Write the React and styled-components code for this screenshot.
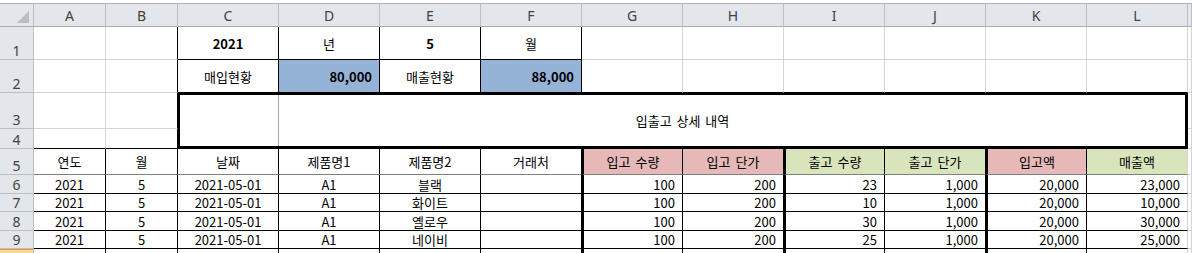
import React from "react";
import styled, { createGlobalStyle } from "styled-components";

const GlobalStyle = createGlobalStyle`
  html, body {
    margin: 0;
    padding: 0;
    background: #fff;
    overflow: hidden;
  }
  body {
    font-family: "Noto Sans CJK KR", "Noto Sans", sans-serif;
  }
`;

const GRID = "#d4d4d4";
const LINE = "1px solid #000";
const THICK = "2px solid #000";
const HEAD_LINE = "#b9bfc7";
const BLUE = "#95b3d7";
const PINK = "#e6b8b7";
const GREEN = "#d8e4bc";

const TopStrip = styled.div`
  height: 3px;
  background: #fff;
  border-bottom: 1px solid #aab1ba;
`;

const Sheet = styled.div`
  display: grid;
  grid-template-columns: 34px 72px 72px repeat(10, 101px) 1fr;
  grid-template-rows: 23px 33px 33px 36px 20px 26px 19px 18px 19px 18px 20px;
`;

const ColHead = styled.div`
  box-sizing: border-box;
  background: #e3e6eb;
  border-right: 1px solid ${HEAD_LINE};
  border-bottom: 1px solid #a3abb5;
  display: flex;
  align-items: center;
  justify-content: center;
  font-family: "Noto Sans", sans-serif;
  font-size: 14px;
  color: #424242;
`;

const Corner = styled(ColHead)`
  align-items: flex-end;
  justify-content: flex-end;
  padding: 0 4px 3px 0;
`;

const RowHead = styled.div`
  box-sizing: border-box;
  background: ${(p) => (p.$active ? "linear-gradient(#f9d99f, #f1c15f)" : "#e3e6eb")};
  border-top: ${(p) => (p.$active ? "1px solid #f29436" : "none")};
  border-right: 1px solid ${HEAD_LINE};
  border-bottom: 1px solid ${HEAD_LINE};
  display: flex;
  align-items: flex-end;
  justify-content: center;
  line-height: 16px;
  font-family: "Noto Sans", sans-serif;
  font-size: 14px;
  color: #424242;
`;

const Cell = styled.div`
  box-sizing: border-box;
  min-width: 0;
  overflow: hidden;
  white-space: nowrap;
  background: ${(p) => p.$bg || "#fff"};
  border-right: ${(p) => p.$r || `1px solid ${GRID}`};
  border-bottom: ${(p) => p.$b || `1px solid ${GRID}`};
  border-left: ${(p) => p.$l || "none"};
  display: flex;
  align-items: center;
  justify-content: ${(p) => (p.$num ? "flex-end" : "center")};
  padding-right: ${(p) => (p.$num ? "7px" : "0")};
  font-size: 13px;
  word-spacing: 2px;
  font-weight: ${(p) => (p.$bold ? 700 : 400)};
  color: #000;
`;

const DetailBox = styled.div`
  grid-column: 4 / 14;
  grid-row: 4 / 6;
  box-sizing: border-box;
  border-style: solid;
  border-color: #000;
  border-width: 2px 3px 3px 2px;
  background: #fff
    linear-gradient(
      to right,
      transparent 98px,
      #a6a6a6 98px,
      #a6a6a6 99px,
      transparent 99px
    );
  display: flex;
  align-items: center;
  justify-content: center;
  font-size: 13px;
  word-spacing: 2px;
  color: #000;
`;

const COLS = ["A", "B", "C", "D", "E", "F", "G", "H", "I", "J", "K", "L"];

const HEADERS = [
  ["연도"], ["월"], ["날짜"], ["제품명1"], ["제품명2"], ["거래처"],
  ["입고 수량", PINK], ["입고 단가", PINK], ["출고 수량", GREEN],
  ["출고 단가", GREEN], ["입고액", PINK], ["매출액", GREEN],
];

const ROWS = [
  ["2021", "5", "2021-05-01", "A1", "블랙", "", "100", "200", "23", "1,000", "20,000", "23,000"],
  ["2021", "5", "2021-05-01", "A1", "화이트", "", "100", "200", "10", "1,000", "20,000", "10,000"],
  ["2021", "5", "2021-05-01", "A1", "옐로우", "", "100", "200", "30", "1,000", "20,000", "30,000"],
  ["2021", "5", "2021-05-01", "A1", "네이비", "", "100", "200", "25", "1,000", "20,000", "25,000"],
];

// borders of the table part (rows 5-10)
const tableEdge = (i) => ({
  $l: i === 6 || i === 8 || i === 10 ? THICK : undefined,
  $r: i === 11 ? undefined : LINE,
});

const CornerMark = () => (
  <svg width="12" height="12" viewBox="0 0 12 12">
    <polygon points="12,0 12,12 0,12" fill="#b9bec5" />
  </svg>
);

const App = () => {
  return (
    <>
      <GlobalStyle />
      <TopStrip />
      <Sheet>
        <Corner>
          <CornerMark />
        </Corner>
        {COLS.map((c) => (
          <ColHead key={c}>{c}</ColHead>
        ))}
        <ColHead />

        {/* row 1 */}
        <RowHead>1</RowHead>
        <Cell />
        <Cell $r={LINE} />
        <Cell $r={LINE} $b={LINE} $bold>2021</Cell>
        <Cell $r={LINE} $b={LINE}>년</Cell>
        <Cell $r={LINE} $b={LINE} $bold>5</Cell>
        <Cell $r={LINE} $b={LINE}>월</Cell>
        <Cell />
        <Cell />
        <Cell />
        <Cell />
        <Cell />
        <Cell />
        <Cell />

        {/* row 2 */}
        <RowHead>2</RowHead>
        <Cell />
        <Cell $r={LINE} />
        <Cell $r={LINE} $b={LINE}>매입현황</Cell>
        <Cell $r={LINE} $b={LINE} $bg={BLUE} $num $bold>80,000</Cell>
        <Cell $r={LINE} $b={LINE}>매출현황</Cell>
        <Cell $r={LINE} $b={LINE} $bg={BLUE} $num $bold>88,000</Cell>
        <Cell $b={LINE} />
        <Cell $b={LINE} />
        <Cell $b={LINE} />
        <Cell $b={LINE} />
        <Cell $b={LINE} />
        <Cell $b={LINE} />
        <Cell />

        {/* rows 3-4 */}
        <RowHead>3</RowHead>
        <Cell />
        <Cell $r={LINE} />
        <Cell />
        <RowHead>4</RowHead>
        <Cell $b={LINE} />
        <Cell $r={LINE} $b={LINE} />
        <Cell />
        <DetailBox>입출고 상세 내역</DetailBox>

        {/* row 5 */}
        <RowHead>5</RowHead>
        {HEADERS.map(([label, bg], i) => (
          <Cell key={label} {...tableEdge(i)} $b="1px solid #7f7f7f" $bg={bg}>
            {label}
          </Cell>
        ))}
        <Cell />

        {/* rows 6-9 */}
        {ROWS.map((row, r) => (
          <React.Fragment key={r}>
            <RowHead>{r + 6}</RowHead>
            {row.map((v, i) => (
              <Cell key={i} {...tableEdge(i)} $b={LINE} $num={i >= 6}>
                {v}
              </Cell>
            ))}
            <Cell />
          </React.Fragment>
        ))}

        {/* row 10 */}
        <RowHead $active>10</RowHead>
        {COLS.map((c, i) => (
          <Cell key={c} {...tableEdge(i)} $b={LINE} />
        ))}
        <Cell />
      </Sheet>
    </>
  );
};

export default App;
